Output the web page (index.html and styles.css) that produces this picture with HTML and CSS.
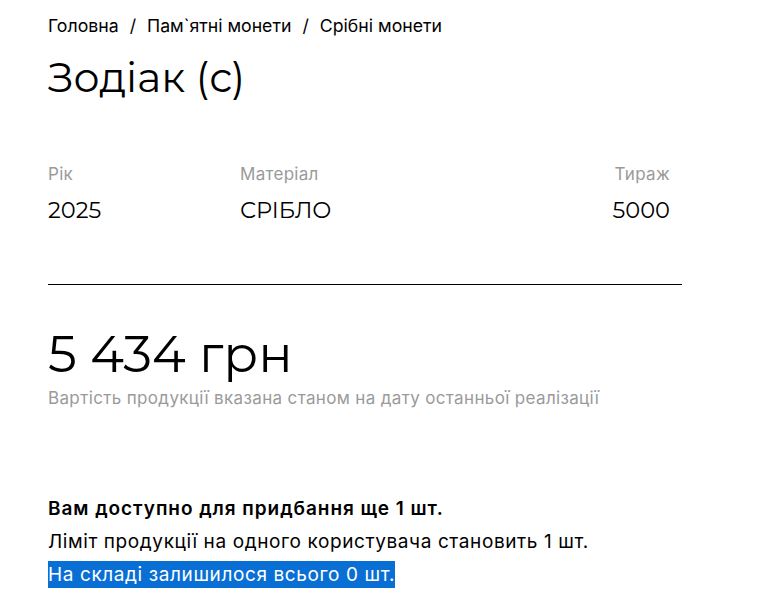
FILE: index.html
```html
<!DOCTYPE html>
<html lang="uk">
<head>
<meta charset="utf-8">
<title>Зодіак (с)</title>
<link rel="stylesheet" href="styles.css">
</head>
<body>
<main class="page">
  <nav class="crumbs">
    <a class="crumb" href="#">Головна</a>
    <span class="sep">/</span>
    <a class="crumb" href="#">Пам`ятні монети</a>
    <span class="sep">/</span>
    <a class="crumb" href="#">Срібні монети</a>
  </nav>
  <h1 class="title">Зодіак (с)</h1>
  <div class="specs">
    <div class="spec">
      <div class="spec-label">Рік</div>
      <div class="spec-value">2025</div>
    </div>
    <div class="spec">
      <div class="spec-label">Матеріал</div>
      <div class="spec-value">СРІБЛО</div>
    </div>
    <div class="spec spec-right">
      <div class="spec-label">Тираж</div>
      <div class="spec-value">5000</div>
    </div>
  </div>
  <hr class="divider">
  <div class="price">5 434 грн</div>
  <p class="price-note">Вартість продукції вказана станом на дату останньої реалізації</p>
  <div class="stock">
    <p class="stock-line stock-strong">Вам доступно для придбання ще 1 шт.</p>
    <p class="stock-line">Ліміт продукції на одного користувача становить 1 шт.</p>
    <p class="stock-line"><span class="selected">На складі залишилося всього 0 шт.</span></p>
  </div>
</main>
</body>
</html>
```
FILE: styles.css
```css
html, body {
  margin: 0;
  padding: 0;
  background: #fff;
  color: #000;
}
.page {
  padding: 14px 0 0 48px;
  width: 634px;
  font-family: Inter, "Liberation Sans", sans-serif;
}
.crumbs {
  display: flex;
  gap: 11px;
  font-size: 17.7px;
  line-height: 24px;
}
.crumb {
  color: #000;
  text-decoration: none;
}
.title {
  margin: 15px 0 0;
  font-family: Montserrat, "DejaVu Sans", sans-serif;
  font-weight: 400;
  font-size: 41px;
  line-height: 48px;
}
.specs {
  display: grid;
  grid-template-columns: 192px 1fr auto;
  padding-right: 12px;
  margin-top: 62px;
}
.spec-label {
  font-size: 17px;
  line-height: 22px;
  letter-spacing: 0.3px;
  color: #9a9a9a;
}
.spec-value {
  margin-top: 11px;
  font-family: Montserrat, "DejaVu Sans", sans-serif;
  font-size: 22.5px;
  line-height: 28px;
}
.spec-right {
  text-align: right;
}
.divider {
  margin: 60px 0 0;
  border: 0;
  border-top: 1px solid #000;
  height: 0;
}
.price {
  margin-top: 41px;
  font-family: Montserrat, "DejaVu Sans", sans-serif;
  font-size: 51px;
  line-height: 56px;
}
.price-note {
  margin: 5px 0 0;
  font-size: 17px;
  line-height: 22px;
  letter-spacing: 0.35px;
  color: #9a9a9a;
}
.stock {
  margin-top: 83px;
}
.stock-line {
  margin: 0;
  font-size: 19px;
  line-height: 33px;
  letter-spacing: 0.6px;
}
.stock-strong {
  font-weight: 600;
  letter-spacing: 0.95px;
}
.selected {
  background: #0a6fd5;
  color: #fff;
  padding: 2px 0;
}
```
